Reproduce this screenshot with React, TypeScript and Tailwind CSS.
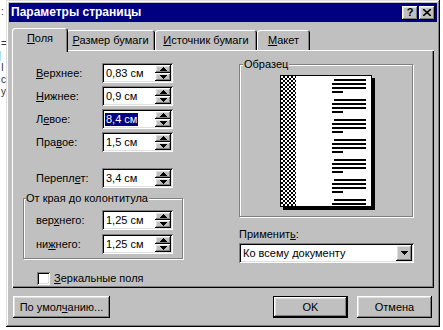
import React from "react";

const raised =
  "shadow-[inset_-1px_-1px_#000,inset_1px_1px_#fff,inset_-2px_-2px_#808080,inset_2px_2px_#dfdfdf]";
const sunken =
  "shadow-[inset_1px_1px_#808080,inset_-1px_-1px_#fff,inset_2px_2px_#000,inset_-2px_-2px_#dfdfdf]";
const etched = "border border-[#808080] shadow-[inset_1px_1px_#fff,1px_1px_#fff]";

function Arrow({ down }: { down?: boolean }) {
  return (
    <svg width="7" height="4" viewBox="0 0 7 4" className="block">
      <path d={down ? "M0 0h7L3.5 4z" : "M3.5 0L7 4H0z"} fill="#000" shapeRendering="crispEdges" />
    </svg>
  );
}

function SpinBtn({ down }: { down?: boolean }) {
  return (
    <div className={`flex h-[8px] items-center justify-center bg-[#c0c0c0] ${raised}`}>
      <Arrow down={down} />
    </div>
  );
}

function Spin({ value, selected }: { value: string; selected?: boolean }) {
  return (
    <div className={`flex h-[20px] w-[71px] bg-white p-[2px] ${sunken}`}>
      <div className="flex flex-1 items-center pl-[1px]">
        <span className={selected ? "bg-[#000080] px-[1px] text-white" : "px-[1px]"}>{value}</span>
      </div>
      <div className="flex w-[16px] flex-col">
        <SpinBtn />
        <SpinBtn down />
      </div>
    </div>
  );
}

function Row({ label, value, selected }: { label: React.ReactNode; value: string; selected?: boolean }) {
  return (
    <div className="flex h-[20px] items-center">
      <span className="w-[66px]">{label}</span>
      <Spin value={value} selected={selected} />
    </div>
  );
}

function Tab({ children, w, active }: { children: React.ReactNode; w: number; active?: boolean }) {
  const cls = active
    ? "relative z-10 -mb-[2px] -mx-[2px] h-[24px] pb-[3px]"
    : "h-[20px]";
  return (
    <div
      className={`flex items-center justify-center rounded-t-[3px] bg-[#c0c0c0] shadow-[inset_1px_1px_#fff,inset_-1px_0_#000,inset_-2px_0_#808080] ${cls}`}
      style={{ width: w }}
    >
      {children}
    </div>
  );
}

function Btn({ children, w, def }: { children: React.ReactNode; w: number; def?: boolean }) {
  return (
    <div
      className={`flex h-[22px] items-center justify-center bg-[#c0c0c0] ${
        def
          ? "shadow-[inset_0_0_0_1px_#000,inset_-2px_-2px_#000,inset_2px_2px_#fff,inset_-3px_-3px_#808080,inset_3px_3px_#dfdfdf]"
          : raised
      }`}
      style={{ width: w }}
    >
      {children}
    </div>
  );
}

function PagePreview() {
  const groups = [0, 1, 2, 3, 4, 5, 6];
  return (
    <div className="flex h-[132px] w-[92px] border border-black bg-white shadow-[3px_3px_0_#000]">
      <div className="w-[15px] [background:repeating-conic-gradient(#000_0%_25%,#fff_0%_50%)_0_0/4px_4px]" />
      <div className="flex flex-1 flex-col overflow-hidden pt-[3px] pl-[36px]">
        {groups.map((g) => (
          <div key={g} className="mb-[6px] flex shrink-0 flex-col gap-[2px]">
            <div className="ml-[2px] h-[2px] w-[32px] bg-black" />
            <div className="h-[2px] w-[34px] bg-black" />
            <div className="h-[2px] w-[34px] bg-black" />
            <div className="h-[2px] w-[11px] bg-black" />
          </div>
        ))}
      </div>
    </div>
  );
}

export default function App() {
  return (
    <div className="flex h-[330px] w-[443px] overflow-hidden bg-white font-['Liberation_Sans',Arial,sans-serif] text-[11px] leading-[13px] text-black">
      <div className="flex w-[6px] flex-col pt-[6px] pl-[1px] text-[10px] leading-[12px] text-[#333]">
        <span>:</span>
        <span className="mt-[20px]">=</span>
        <span className="-ml-[3px]">]</span>
        <span>I</span>
        <span>c</span>
        <span>y</span>
      </div>
      <div className="flex h-[327px] w-[434px] flex-col bg-[#c0c0c0] p-[3px] shadow-[inset_-1px_-1px_#000,inset_1px_1px_#dfdfdf,inset_-2px_-2px_#808080,inset_2px_2px_#fff]">
        {/* title */}
        <div className="flex h-[19px] items-center justify-between bg-[#000080] pl-[2px] pr-[2px]">
          <span className="text-[12px] font-bold text-white">Параметры страницы</span>
          <div className="flex gap-[1px]">
            <div className={`flex h-[14px] w-[16px] items-center justify-center bg-[#c0c0c0] text-[11px] font-bold leading-none ${raised}`}>
              ?
            </div>
            <div className={`flex h-[14px] w-[16px] items-center justify-center bg-[#c0c0c0] ${raised}`}>
              <svg width="8" height="7" viewBox="0 0 8 7">
                <path d="M0 0l8 7M8 0L0 7" stroke="#000" strokeWidth="1.6" />
              </svg>
            </div>
          </div>
        </div>

        {/* tabs */}
        <div className="ml-[3px] mt-[6px] flex items-end pl-[2px]">
          <Tab w={56} active>
            <span><u>П</u>оля</span>
          </Tab>
          <Tab w={89}>
            <span><u>Р</u>азмер бумаги</span>
          </Tab>
          <Tab w={102}>
            <span><u>И</u>сточник бумаги</span>
          </Tab>
          <Tab w={53}>
            <span><u>М</u>акет</span>
          </Tab>
        </div>

        {/* panel */}
        <div className="ml-[3px] flex h-[238px] w-[422px] shadow-[inset_1px_1px_#fff,inset_-1px_-1px_#000,inset_-2px_-2px_#808080]">
          <div className="flex w-[190px] flex-col pl-[11px] pt-[13px]">
            <div className="flex flex-col gap-[3px] pl-[13px]">
              <Row label={<><u>В</u>ерхнее:</>} value="0,83 см" />
              <Row label={<><u>Н</u>ижнее:</>} value="0,9 см" />
              <Row label={<>Л<u>е</u>вое:</>} value="8,4 см" selected />
              <Row label={<>Пра<u>в</u>ое:</>} value="1,5 см" />
              <div className="mt-[13px]">
                <Row label={<>Перепл<u>е</u>т:</>} value="3,4 см" />
              </div>
            </div>
            <div className={`relative mt-[10px] flex w-[160px] flex-col gap-[4px] pb-[4px] pl-[12px] pt-[11px] ${etched}`}>
              <span className="absolute -top-[7px] left-[2px] bg-[#c0c0c0] pr-[1px]">От края до колонтитула</span>
              <Row label={<>вер<u>х</u>него:</>} value="1,25 см" />
              <Row label={<>ни<u>ж</u>него:</>} value="1,25 см" />
            </div>
            <div className="mt-[13px] flex items-center gap-[4px] pl-[14px]">
              <div className={`h-[13px] w-[13px] bg-white ${sunken}`} />
              <span><u>З</u>еркальные поля</span>
            </div>
          </div>

          <div className="flex flex-col pl-[37px] pt-[14px]">
            <div className={`relative flex h-[153px] w-[174px] justify-center pt-[10px] ${etched}`}>
              <span className="absolute -top-[7px] left-[3px] bg-[#c0c0c0] px-[1px]">Образец</span>
              <PagePreview />
            </div>
            <span className="mt-[11px]">Применит<u>ь</u>:</span>
            <div className={`mt-[2px] flex h-[20px] w-[175px] bg-white p-[2px] ${sunken}`}>
              <div className="flex flex-1 items-center pl-[2px]">Ко всему документу</div>
              <div className={`flex w-[16px] items-center justify-center bg-[#c0c0c0] ${raised}`}>
                <Arrow down />
              </div>
            </div>
          </div>
        </div>

        {/* buttons */}
        <div className="ml-[4px] mt-[8px] flex">
          <Btn w={97}>
            <span>По умол<u>ч</u>анию...</span>
          </Btn>
          <div className="ml-auto mr-[5px] flex gap-[9px]">
            <Btn w={75} def>OK</Btn>
            <Btn w={75}>Отмена</Btn>
          </div>
        </div>
      </div>
    </div>
  );
}
